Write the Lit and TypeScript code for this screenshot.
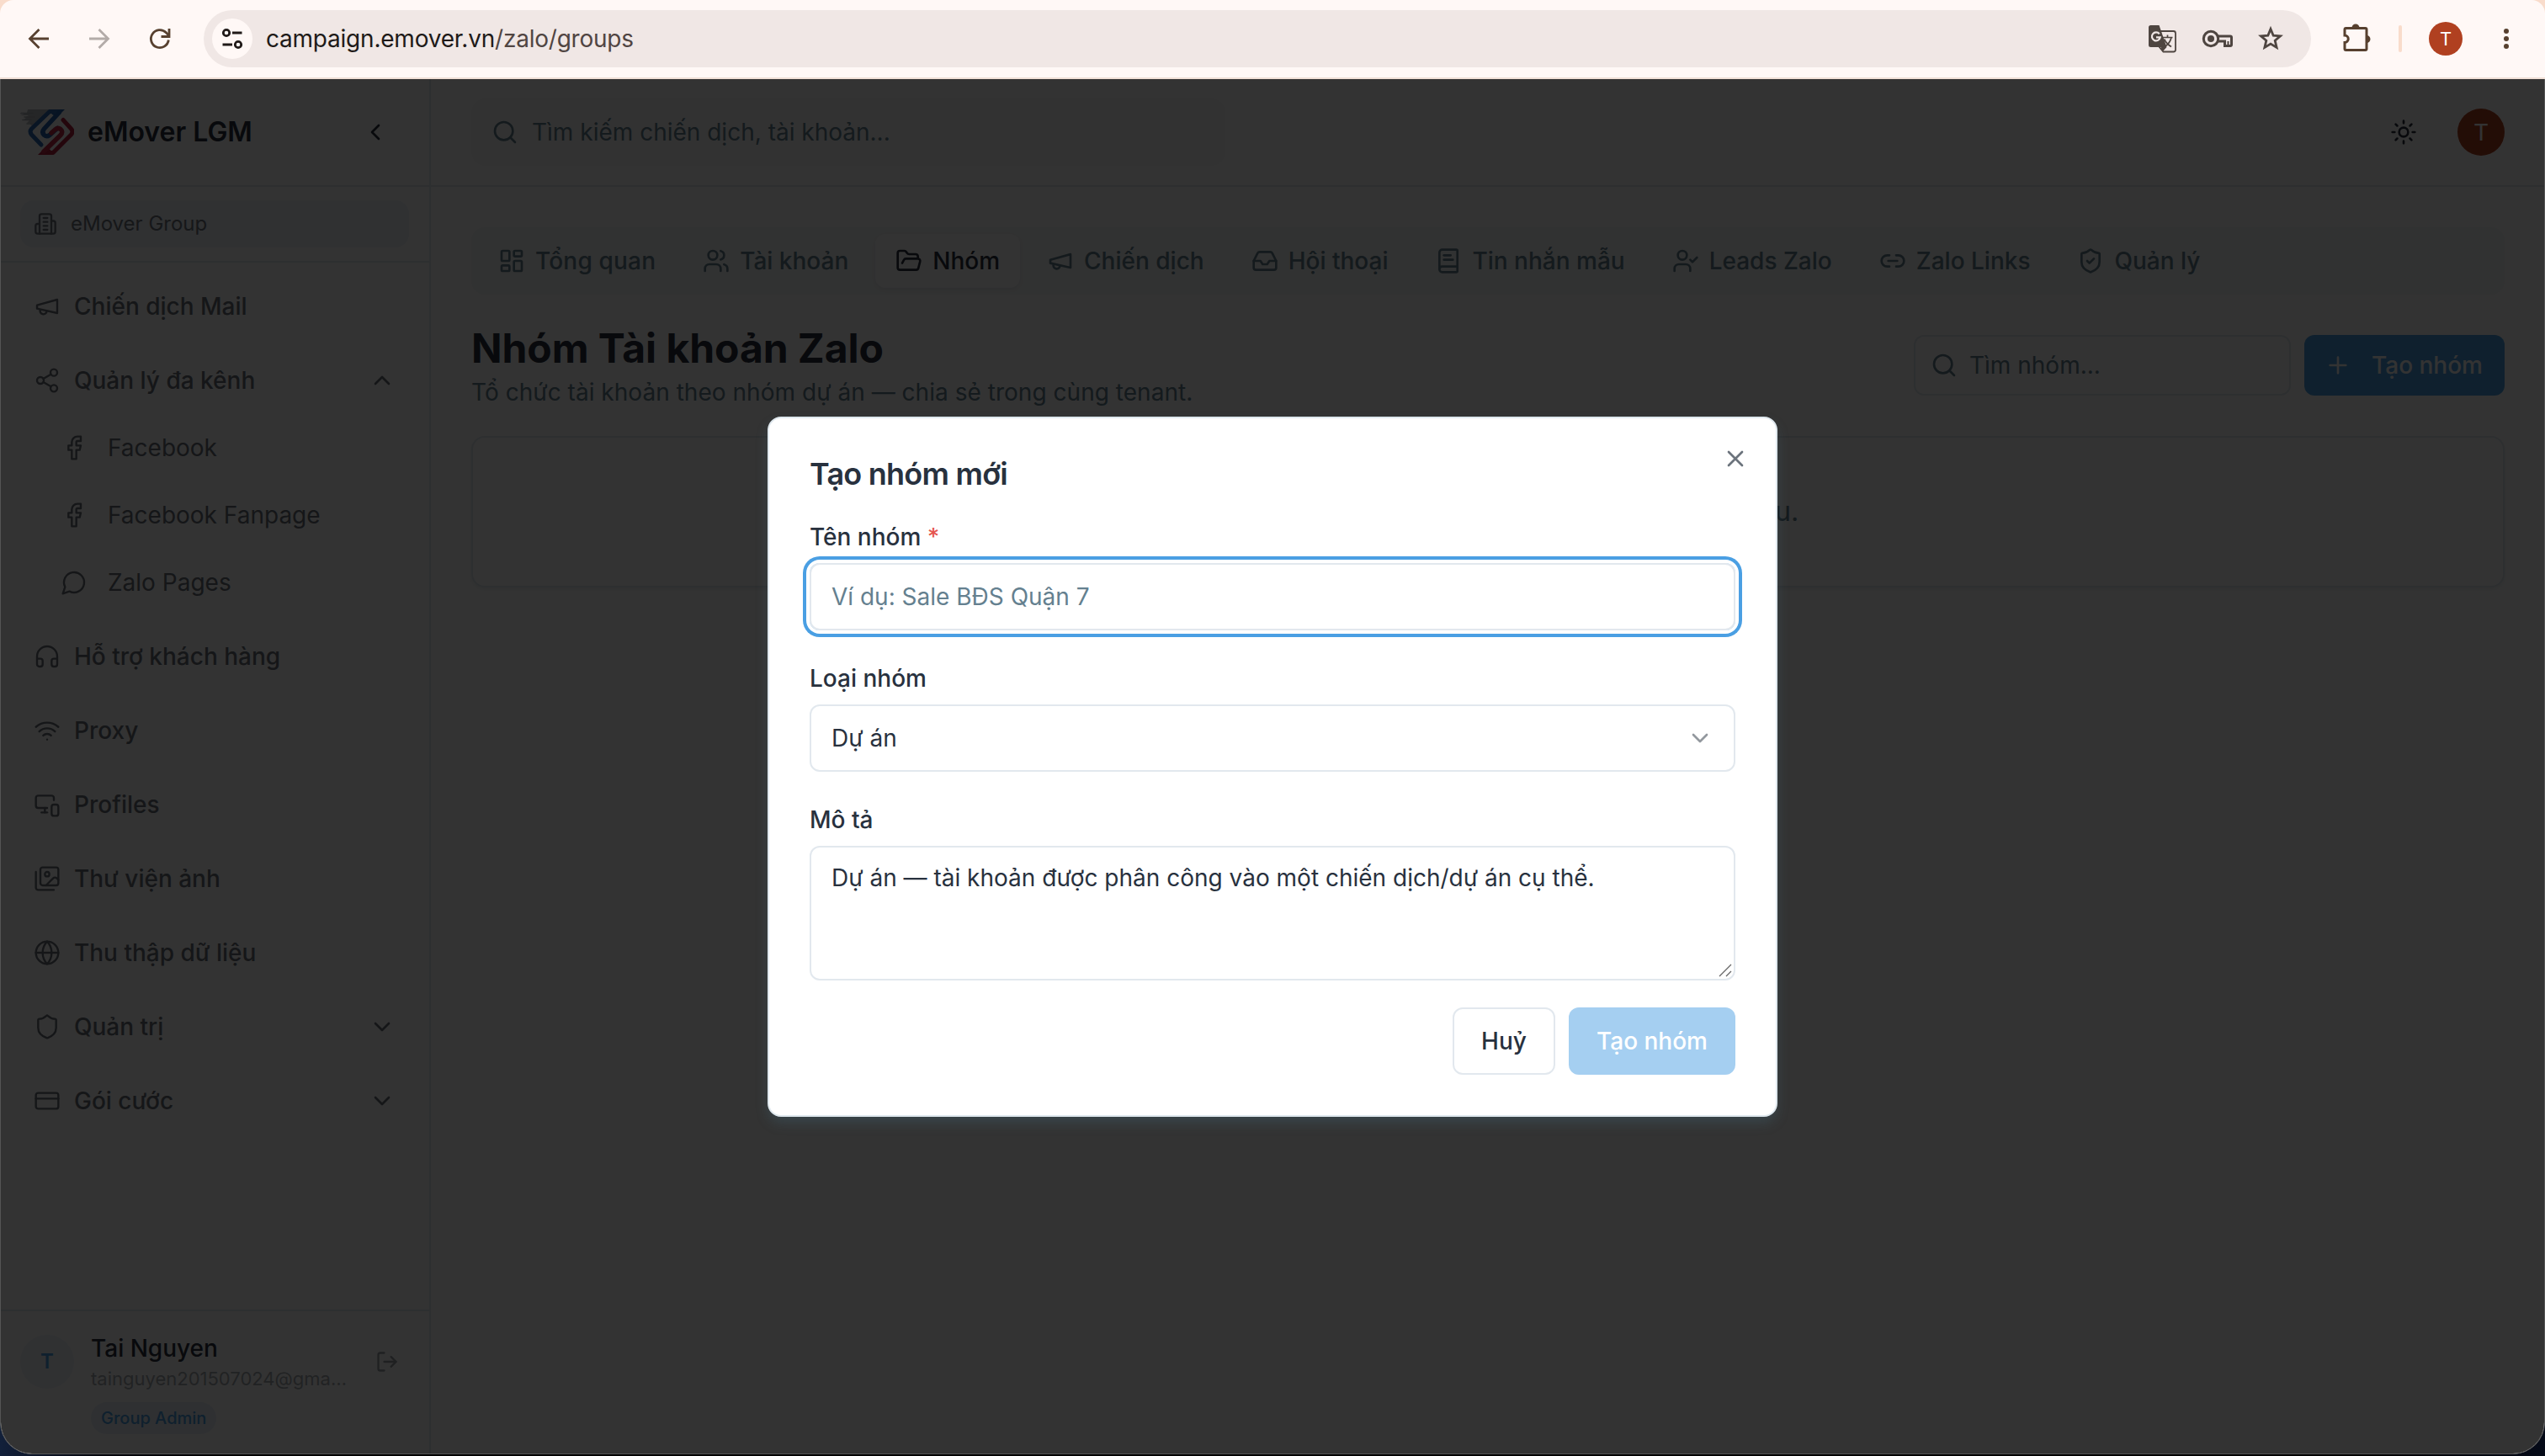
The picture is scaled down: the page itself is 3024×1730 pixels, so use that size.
import { LitElement, html, svg, css, nothing, type SVGTemplateResult } from "lit";
import { customElement, property } from "lit/decorators.js";
import { classMap } from "lit/directives/class-map.js";

const ICONS: Record<string, SVGTemplateResult> = {
  megaphone: svg`<path d="m3 11 18-5v12L3 14v-3z"/><path d="M11.6 16.8a3 3 0 1 1-5.8-1.6"/>`,
  share: svg`<circle cx="18" cy="5" r="3"/><circle cx="6" cy="12" r="3"/><circle cx="18" cy="19" r="3"/><path d="M8.59 13.51l6.83 3.98M15.41 6.51l-6.82 3.98"/>`,
  facebook: svg`<path d="M18 2h-3a5 5 0 0 0-5 5v3H7v4h3v8h4v-8h3l1-4h-4V7a1 1 0 0 1 1-1h3z"/>`,
  message: svg`<path d="M7.9 20A9 9 0 1 0 4 16.1L2 22Z"/>`,
  headphones: svg`<path d="M3 14h3a2 2 0 0 1 2 2v3a2 2 0 0 1-2 2H5a2 2 0 0 1-2-2v-7a9 9 0 0 1 18 0v7a2 2 0 0 1-2 2h-1a2 2 0 0 1-2-2v-3a2 2 0 0 1 2-2h3"/>`,
  wifi: svg`<path d="M12 20h.01"/><path d="M2 8.82a15 15 0 0 1 20 0"/><path d="M5 12.859a10 10 0 0 1 14 0"/><path d="M8.5 16.429a5 5 0 0 1 7 0"/>`,
  devices: svg`<path d="M18 8V6a2 2 0 0 0-2-2H4a2 2 0 0 0-2 2v7a2 2 0 0 0 2 2h8"/><path d="M10 19v-3.96 3.15"/><path d="M7 19h5"/><rect width="6" height="10" x="16" y="12" rx="2"/>`,
  images: svg`<path d="M18 22H4a2 2 0 0 1-2-2V6"/><path d="m22 13-1.296-1.296a2.41 2.41 0 0 0-3.408 0L11 18"/><circle cx="12" cy="8" r="2"/><rect width="16" height="16" x="6" y="2" rx="2"/>`,
  globe: svg`<circle cx="12" cy="12" r="10"/><path d="M12 2a14.5 14.5 0 0 0 0 20 14.5 14.5 0 0 0 0-20"/><path d="M2 12h20"/>`,
  shield: svg`<path d="M20 13c0 5-3.5 7.5-7.66 8.95a1 1 0 0 1-.67-.01C7.5 20.5 4 18 4 13V6a1 1 0 0 1 1-1c2 0 4.5-1.2 6.24-2.72a1.17 1.17 0 0 1 1.52 0C14.51 3.81 17 5 19 5a1 1 0 0 1 1 1z"/>`,
  shieldCheck: svg`<path d="M20 13c0 5-3.5 7.5-7.66 8.95a1 1 0 0 1-.67-.01C7.5 20.5 4 18 4 13V6a1 1 0 0 1 1-1c2 0 4.5-1.2 6.24-2.72a1.17 1.17 0 0 1 1.52 0C14.51 3.81 17 5 19 5a1 1 0 0 1 1 1z"/><path d="m9 12 2 2 4-4"/>`,
  card: svg`<rect width="20" height="14" x="2" y="5" rx="2"/><path d="M2 10h20"/>`,
  logout: svg`<path d="M9 21H5a2 2 0 0 1-2-2V5a2 2 0 0 1 2-2h4"/><path d="m16 17 5-5-5-5"/><path d="M21 12H9"/>`,
  building: svg`<path d="M6 22V4a2 2 0 0 1 2-2h8a2 2 0 0 1 2 2v18Z"/><path d="M6 12H4a2 2 0 0 0-2 2v6a2 2 0 0 0 2 2h2"/><path d="M18 9h2a2 2 0 0 1 2 2v9a2 2 0 0 1-2 2h-2"/><path d="M10 6h4M10 10h4M10 14h4M10 18h4"/>`,
  dashboard: svg`<rect width="7" height="9" x="3" y="3" rx="1"/><rect width="7" height="5" x="14" y="3" rx="1"/><rect width="7" height="9" x="14" y="12" rx="1"/><rect width="7" height="5" x="3" y="16" rx="1"/>`,
  users: svg`<path d="M16 21v-2a4 4 0 0 0-4-4H6a4 4 0 0 0-4 4v2"/><circle cx="9" cy="7" r="4"/><path d="M22 21v-2a4 4 0 0 0-3-3.87"/><path d="M16 3.13a4 4 0 0 1 0 7.75"/>`,
  folder: svg`<path d="m6 14 1.5-2.9A2 2 0 0 1 9.24 10H20a2 2 0 0 1 1.94 2.5l-1.54 6a2 2 0 0 1-1.95 1.5H4a2 2 0 0 1-2-2V5a2 2 0 0 1 2-2h3.9a2 2 0 0 1 1.69.9l.81 1.2a2 2 0 0 0 1.67.9H18a2 2 0 0 1 2 2v2"/>`,
  inbox: svg`<path d="M22 12h-6l-2 3h-4l-2-3H2"/><path d="M5.45 5.11 2 12v6a2 2 0 0 0 2 2h16a2 2 0 0 0 2-2v-6l-3.45-6.89A2 2 0 0 0 16.76 4H7.24a2 2 0 0 0-1.79 1.11z"/>`,
  template: svg`<path d="M4 19.500v-15A2.500 2.500 0 0 1 6.500 2H19a1 1 0 0 1 1 1v18a1 1 0 0 1-1 1H6.500a1 1 0 0 1 0-5H20"/><path d="M8 11h8"/><path d="M8 7h6"/>`,
  userCheck: svg`<path d="M16 21v-2a4 4 0 0 0-4-4H6a4 4 0 0 0-4 4v2"/><circle cx="9" cy="7" r="4"/><path d="m16 11 2 2 4-4"/>`,
  link: svg`<path d="M9 17H7A5 5 0 0 1 7 7h2"/><path d="M15 7h2a5 5 0 1 1 0 10h-2"/><path d="M8 12h8"/>`,
  search: svg`<circle cx="11" cy="11" r="8"/><path d="m21 21-4.3-4.3"/>`,
  sun: svg`<circle cx="12" cy="12" r="4"/><path d="M12 2v2M12 20v2M4.93 4.93l1.41 1.41M17.66 17.66l1.41 1.41M2 12h2M20 12h2M6.34 17.66l-1.41 1.41M19.07 4.93l-1.41 1.41"/>`,
  plus: svg`<path d="M5 12h14M12 5v14"/>`,
  close: svg`<path d="M18 6 6 18M6 6l12 12"/>`,
  up: svg`<path d="m18 15-6-6-6 6"/>`,
  down: svg`<path d="m6 9 6 6 6-6"/>`,
  left: svg`<path d="m15 18-6-6 6-6"/>`,
};

@customElement("ui-icon")
class UiIcon extends LitElement {
  @property() name = "";
  @property({ type: Number }) weight = 2;
  static styles = css`
    :host { display: block; width: 32px; height: 32px; flex: none; }
    svg { display: block; width: 100%; height: 100%; }
  `;
  render() {
    return html`<svg viewBox="0 0 24 24" fill="none" stroke="currentColor" stroke-width=${this.weight}
      stroke-linecap="round" stroke-linejoin="round">${ICONS[this.name] ?? nothing}</svg>`;
  }
}

interface NavItem { icon: string; label: string; chevron?: "up" | "down"; sub?: boolean }

const NAV: NavItem[] = [
  { icon: "megaphone", label: "Chiến dịch Mail" },
  { icon: "share", label: "Quản lý đa kênh", chevron: "up" },
  { icon: "facebook", label: "Facebook", sub: true },
  { icon: "facebook", label: "Facebook Fanpage", sub: true },
  { icon: "message", label: "Zalo Pages", sub: true },
  { icon: "headphones", label: "Hỗ trợ khách hàng" },
  { icon: "wifi", label: "Proxy" },
  { icon: "devices", label: "Profiles" },
  { icon: "images", label: "Thư viện ảnh" },
  { icon: "globe", label: "Thu thập dữ liệu" },
  { icon: "shield", label: "Quản trị", chevron: "down" },
  { icon: "card", label: "Gói cước", chevron: "down" },
];

const TABS = [
  { icon: "dashboard", label: "Tổng quan" },
  { icon: "users", label: "Tài khoản" },
  { icon: "folder", label: "Nhóm", active: true },
  { icon: "megaphone", label: "Chiến dịch" },
  { icon: "inbox", label: "Hội thoại" },
  { icon: "template", label: "Tin nhắn mẫu" },
  { icon: "userCheck", label: "Leads Zalo" },
  { icon: "link", label: "Zalo Links" },
  { icon: "shieldCheck", label: "Quản lý" },
];

@customElement("browser-bar")
class BrowserBar extends LitElement {
  static styles = css`
    :host { display: block; background: #f9dccb; }
    .bar {
      box-sizing: border-box; height: 94px; display: flex; align-items: center;
      background: #fff8f6; border-bottom: 2px solid #f0dfd6;
      border-radius: 16px 16px 0 0; color: #57402f;
      font-family: Inter, "Liberation Sans", sans-serif;
    }
    .nav { display: flex; align-items: center; gap: 40px; padding-left: 30px; width: 212px; }
    .nav svg { width: 32px; height: 32px; display: block; }
    .off { color: #b3aba8; }
    .pill {
      flex: 1; height: 68px; border-radius: 34px; background: #f0e7e5; display: flex; align-items: center;
      box-sizing: border-box; padding: 0 31px 0 10px; color: #4e4540;
    }
    .site {
      width: 48px; height: 48px; border-radius: 50%; background: #fff8f6; margin-right: 16px;
      display: flex; align-items: center; justify-content: center; color: #201a18;
    }
    .url { font-size: 28px; line-height: 40px; color: #504542; flex: 1; letter-spacing: -0.22px; }
    .host { color: #201a18; }
    .tools { display: flex; align-items: center; gap: 26px; }
    .tools svg { display: block; }
    .right { width: 278px; display: flex; align-items: center; }
    .ext { margin-left: 34px; }
    .rule { width: 4px; height: 32px; border-radius: 2px; background: #f9dccb; margin-left: 30px; }
    .avatar {
      width: 40px; height: 40px; border-radius: 50%; background: #b04020; color: #fff;
      display: flex; align-items: center; justify-content: center; font: 400 22px Roboto, sans-serif; margin-left: 32px;
    }
    .dots { margin-left: 46px; display: block; }
  `;
  render() {
    return html`<div class="bar">
      <div class="nav">
        <svg viewBox="0 0 32 32" fill="none" stroke="currentColor" stroke-width="2.8"><path d="M28 16H6M16.5 5 5.5 16l11 11"/></svg>
        <svg class="off" viewBox="0 0 32 32" fill="none" stroke="currentColor" stroke-width="2.8"><path d="M4 16h22M15.500 5l11 11-11 11"/></svg>
        <svg viewBox="0 0 32 32" fill="none" stroke="currentColor" stroke-width="2.8"><path d="M26.300 17.500A10.500 10.500 0 1 1 23.400 8.800L26.500 12"/><path d="M27 4v9.500h-9.500"/></svg>
      </div>
      <div class="pill">
        <div class="site">
          <svg width="28" height="36" viewBox="0 0 28 36" fill="none" stroke="currentColor" stroke-width="2.800">
            <circle cx="7" cy="11" r="3.700"/><path d="M14 11h11.500M2.500 25H14"/><circle cx="21" cy="25" r="3.700"/>
          </svg>
        </div>
        <div class="url"><span class="host">campaign.emover.vn</span>/zalo/groups</div>
        <div class="tools">
          <svg width="38" height="38" viewBox="0 0 38 38">
            <path d="M14 10h17.500a2.500 2.500 0 0 1 2.500 2.500V32a2.500 2.500 0 0 1-2.500 2.500H19.500L14 28z" fill="none" stroke="currentColor" stroke-width="1.800"/>
            <path d="M4.500 3h10l9 26-5 5.500L16.500 29H4.500A2.500 2.500 0 0 1 2 26.500v-21A2.500 2.500 0 0 1 4.500 3z" fill="currentColor"/>
            <path d="M14.800 13.300A5 5 0 1 0 15.800 17.400H11" fill="none" stroke="#f0e7e5" stroke-width="2.200"/>
            <path d="M18.500 17.500h12M24.500 14.500v3M29 17.500c-1 5-4 8.500-8 11M20.500 19.500c2 4 5 7 8.500 9" fill="none" stroke="currentColor" stroke-width="1.700"/>
          </svg>
          <svg width="40" height="32" viewBox="0 0 40 32" fill="none" stroke="currentColor" stroke-width="3">
            <circle cx="12" cy="16" r="8.700"/><circle cx="12" cy="16" r="4" fill="currentColor" stroke="none"/>
            <path d="M20 13h15a1.500 1.500 0 0 1 1.500 1.500V23a1.500 1.500 0 0 1-1.500 1.500h-6.500V19H20"/><path d="M32.500 19v4" stroke-width="2"/>
          </svg>
          <svg width="34" height="34" viewBox="0 0 34 34" fill="none" stroke="currentColor" stroke-width="2.800">
            <path d="m17 5.500 3.200 7.700 8.300.7-6.300 5.400 1.900 8.100-7.100-4.300-7.100 4.300 1.900-8.100-6.300-5.400 8.300-.7z"/>
          </svg>
        </div>
      </div>
      <div class="right">
        <svg class="ext" width="40" height="40" viewBox="0 0 40 40">
          <path d="M7.500 7.500h23a1.500 1.500 0 0 1 1.500 1.500v23a1.500 1.500 0 0 1-1.500 1.500h-23A1.500 1.500 0 0 1 6 32v-7.500a4.200 4.200 0 0 0 0-8.500v-7a1.500 1.500 0 0 1 1.500-1.500z" fill="none" stroke="currentColor" stroke-width="3"/>
          <path d="M14.500 7a4.500 4.500 0 0 1 9 0zM32 16a4.500 4.500 0 0 1 0 9z" fill="currentColor"/>
        </svg>
        <div class="rule"></div>
        <div class="avatar">T</div>
        <svg class="dots" width="12" height="32" viewBox="0 0 12 32" fill="currentColor"><circle cx="6" cy="7" r="3"/><circle cx="6" cy="16" r="3"/><circle cx="6" cy="25" r="3"/></svg>
      </div>
    </div>`;
  }
}

@customElement("app-root")
class AppRoot extends LitElement {
  static styles = css`
    :host {
      --ink: #28313e; --muted: #64808f; --line: #e2e8ee; --blue: #4a9fe3; --soft: #697078;
      display: block; width: 3024px; height: 1730px; overflow: hidden;
      background: linear-gradient(90deg, #12203a 0, #05060c 120px, #000 300px, #000 2800px, #050a18 3024px);
      font-family: Inter, "Liberation Sans", sans-serif; font-size: 28px; line-height: 40px; color: var(--ink);
    }
    * { box-sizing: border-box; }
    .page {
      position: relative; height: 1634px; display: grid; grid-template-columns: 511px 1fr;
      background: #fff; border: 1px solid #555; border-top: 0; border-radius: 0 0 38px 38px; overflow: hidden;
    }
    .side { border-right: 2px solid var(--line); display: flex; flex-direction: column; padding-left: 0; }
    .brand { height: 128px; border-bottom: 2px solid var(--line); display: flex; align-items: center; padding: 0 48px 0 23px; }
    .brand svg { width: 64px; height: 56px; display: block; }
    .brand h1 { margin: 0 0 0 16px; font-size: 32px; line-height: 48px; font-weight: 600; flex: 1; letter-spacing: 0; }
    .org { border-bottom: 2px solid var(--line); padding: 16px 24px 16px 23px; }
    .orgbox {
      height: 56px; border-radius: 16px; background: #edf3fb; display: flex; align-items: center; gap: 16px; padding: 0 16px;
      font-size: 24px; color: #6f757c;
    }
    .orgbox ui-icon, .out { width: 28px; height: 28px; }
    .menu { padding: 12px 24px 12px 23px; flex: 1; color: var(--soft); }
    .item { height: 80px; margin-bottom: 8px; padding: 0 16px; display: flex; align-items: center; gap: 16px; font-weight: 500; }
    .item span { flex: 1; }
    .item.sub { height: 72px; padding-left: 48px; gap: 24px; font-weight: 400; position: relative; top: -4px; }
    .user { height: 171px; border-top: 2px solid var(--line); padding: 24px 36px 0 23px; display: flex; align-items: flex-start; }
    .initial {
      width: 64px; height: 64px; margin-top: 4px; border-radius: 50%; background: #edf3fb; color: var(--blue);
      display: flex; align-items: center; justify-content: center; font-weight: 600; font-size: 24px;
    }
    .who { margin-left: 20px; width: 304px; }
    .name { font-weight: 500; }
    .mail { font-size: 22px; line-height: 32px; color: #a6abb0; white-space: nowrap; }
    .badge {
      display: inline-block; margin-top: 12px; height: 38px; line-height: 38px; padding: 0 12px; border-radius: 19px;
      background: #e9f0f7; color: var(--blue); font-size: 20px; font-weight: 500; vertical-align: top;
    }
    .out { margin: 22px 0 0 34px; color: #9ca1a7; }
    .body { display: flex; flex-direction: column; min-width: 0; }
    .top { height: 128px; border-bottom: 2px solid var(--line); display: flex; align-items: center; padding: 0 47px 0 48px; }
    .find { width: 896px; height: 80px; border-radius: 16px; background: #fafbfb; display: flex; align-items: center; gap: 16px; padding: 0 24px; color: var(--muted); }
    .top .sun { margin-left: auto; }
    .face {
      width: 56px; height: 56px; border-radius: 50%; background: #b04020; color: #fff; margin-left: 48px;
      display: flex; align-items: center; justify-content: center; font: 400 28px Roboto, sans-serif;
    }
    .main { padding: 48px 47px 0 48px; }
    .tabs { height: 80px; border-radius: 16px; background: #f6f7f7; padding: 8px; display: flex; gap: 8px; }
    .tab { height: 64px; padding: 0 24px; border-radius: 12px; display: flex; align-items: center; gap: 12px; font-weight: 500; color: var(--muted); white-space: nowrap; }
    .tab:first-child { letter-spacing: 0.18px; }
    .tab.on { background: #fff; color: #28313e; box-shadow: 0 2px 4px rgba(40, 70, 100, 0.08); }
    .head { display: flex; justify-content: space-between; align-items: flex-start; height: 120px; margin-top: 32px; }
    .head h2 { margin: 0; font-size: 48px; line-height: 64px; font-weight: 700; letter-spacing: -0.05px; }
    .head p { margin: 0; color: var(--muted); letter-spacing: 0.03px; }
    .actions { display: flex; gap: 16px; padding-top: 16px; }
    .filter { width: 448px; height: 72px; border: 2px solid var(--line); border-radius: 12px; display: flex; align-items: center; gap: 14px; padding: 0 18px; color: var(--muted); }
    .create { width: 238px; height: 72px; border-radius: 12px; background: var(--blue); color: #fff; display: flex; align-items: center; gap: 24px; padding: 0 24px; font-weight: 500; white-space: nowrap; }
    .empty { margin-top: 16px; height: 180px; border: 2px solid var(--line); border-radius: 16px; display: flex; align-items: center; justify-content: center; font-size: 32px; color: var(--muted); box-shadow: 0 2px 4px rgba(40, 100, 100, 0.1); }
    .veil { position: absolute; inset: 0; background: rgba(0, 0, 0, 0.8); display: flex; justify-content: center; align-items: center; }
    .dialog {
      position: relative; width: 1200px; height: 832px; background: #fff; border: 2px solid #dfe8ee; border-radius: 16px;
      padding: 48px; display: flex; flex-direction: column; box-shadow: 0 8px 16px -2px rgba(74, 120, 140, 0.3);
    }
    .dialog h3 { margin: 0; font-size: 36px; line-height: 36px; font-weight: 600; letter-spacing: -0.75px; }
    .x { position: absolute; right: 32px; top: 32px; color: #6b737c; }
    .label { line-height: 28px; font-weight: 500; margin-bottom: 17px; }
    .star { color: #e5564f; }
    .ctl { height: 80px; border: 2px solid var(--line); border-radius: 12px; padding: 0 24px; display: flex; align-items: center; flex: none; }
    .ctl.focus { color: var(--muted); box-shadow: 0 0 0 4px #fff, 0 0 0 8px var(--blue); }
    .ctl ui-icon { margin-left: auto; color: #93989e; }
    .area { position: relative; height: 160px; align-items: flex-start; padding-top: 16px; }
    .grip { position: absolute; right: 2px; bottom: 2px; width: 16px; height: 16px; }
    .f1 { margin-top: 43px; }
    .f2, .f3 { margin-top: 43px; }
    .foot { display: flex; justify-content: flex-end; gap: 16px; margin-top: 32px; }
    .btn { height: 80px; border-radius: 12px; display: flex; align-items: center; justify-content: center; font-weight: 500; }
    .cancel { width: 122px; border: 2px solid var(--line); }
    .ok { width: 198px; background: #a5cff1; color: #fff; }
  `;

  private logo() {
    return html`<svg viewBox="0 0 64 56" fill="none" stroke-linecap="round" stroke-linejoin="round">
      <path d="M9 1h30L14 21l-3-4H8l3-3H3l4-3H5l5-3H0l8-3z" fill="#b9bdc0"/>
      <path d="M1 5.500h14M5 10h12M3 13.500h10M8 18h6" stroke="#b0b4b8" stroke-width="1.600"/>
      <path d="M34 1h19L44 10l-6-3z" fill="#2562ad"/>
      <path d="M46 3.500H35L13.500 24q-3 3.500 0 7L25 43" stroke="#2d6bb5" stroke-width="5"/>
      <path d="M46 5 28.500 24q-3.500 4 0 7.500 3 2.500 6.500 0l9-8" stroke="#2562ad" stroke-width="5.500"/>
      <path d="M21 55h17l-2-6-6-3z" fill="#b5203f"/>
      <path d="M28 52.500h11L60.500 31q3-3.500 0-7L51 13.500" stroke="#b5203f" stroke-width="5"/>
      <path d="M28 51 48 31.500q3.500-4 0-7-3.500-2.500-6.500.500l-4.500 4" stroke="#c02848" stroke-width="5.500"/>
    </svg>`;
  }

  render() {
    return html`
      <browser-bar></browser-bar>
      <div class="page">
        <aside class="side">
          <div class="brand">${this.logo()}<h1>eMover LGM</h1><ui-icon name="left"></ui-icon></div>
          <div class="org"><div class="orgbox"><ui-icon name="building"></ui-icon>eMover Group</div></div>
          <nav class="menu">
            ${NAV.map((n) => html`<div class=${classMap({ item: true, sub: !!n.sub })}>
              <ui-icon name=${n.icon} weight="1.800"></ui-icon><span>${n.label}</span>
              ${n.chevron ? html`<ui-icon name=${n.chevron}></ui-icon>` : nothing}
            </div>`)}
          </nav>
          <div class="user">
            <div class="initial">T</div>
            <div class="who">
              <div class="name">Tai Nguyen</div>
              <div class="mail">tainguyen201507024@gma…</div>
              <div class="badge">Group Admin</div>
            </div>
            <ui-icon class="out" name="logout"></ui-icon>
          </div>
        </aside>
        <section class="body">
          <header class="top">
            <div class="find"><ui-icon name="search"></ui-icon>Tìm kiếm chiến dịch, tài khoản...</div>
            <ui-icon class="sun" name="sun"></ui-icon>
            <div class="face">T</div>
          </header>
          <div class="main">
            <div class="tabs">
              ${TABS.map((t) => html`<div class=${classMap({ tab: true, on: !!t.active })}><ui-icon name=${t.icon}></ui-icon>${t.label}</div>`)}
            </div>
            <div class="head">
              <div>
                <h2>Nhóm Tài khoản Zalo</h2>
                <p>Tổ chức tài khoản theo nhóm dự án — chia sẻ trong cùng tenant.</p>
              </div>
              <div class="actions">
                <div class="filter"><ui-icon name="search"></ui-icon>Tìm nhóm...</div>
                <div class="create"><ui-icon name="plus"></ui-icon>Tạo nhóm</div>
              </div>
            </div>
            <div class="empty">Chưa có nhóm nào. Bấm "Tạo nhóm" để bắt đầu.</div>
          </div>
        </section>
        <div class="veil">
          <div class="dialog">
            <ui-icon class="x" name="close"></ui-icon>
            <h3>Tạo nhóm mới</h3>
            <div class="label f1">Tên nhóm <span class="star">*</span></div>
            <div class="ctl focus">Ví dụ: Sale BĐS Quận 7</div>
            <div class="label f2">Loại nhóm</div>
            <div class="ctl">Dự án<ui-icon name="down"></ui-icon></div>
            <div class="label f3">Mô tả</div>
            <div class="ctl area">Dự án — tài khoản được phân công vào một chiến dịch/dự án cụ thể.
              <svg class="grip" viewBox="0 0 16 16" stroke="#666" stroke-width="1.300"><path d="M1 15 15 1M9 15l6-6"/></svg>
            </div>
            <div class="foot"><div class="btn cancel">Huỷ</div><div class="btn ok">Tạo nhóm</div></div>
          </div>
        </div>
      </div>`;
  }
}
